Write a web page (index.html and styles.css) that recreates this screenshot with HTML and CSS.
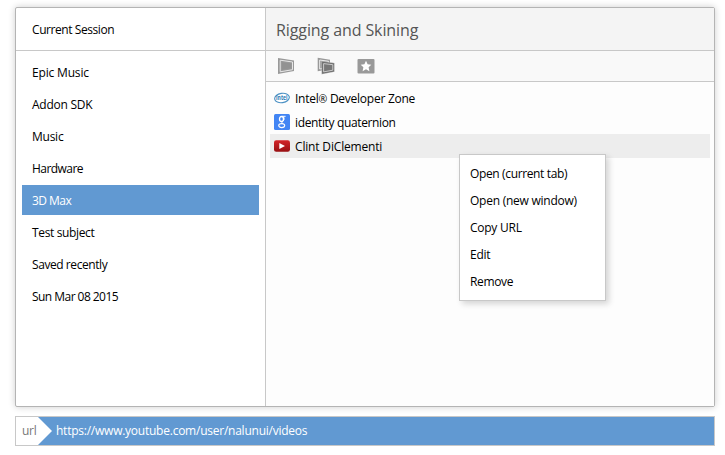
FILE: index.html
```html
<!DOCTYPE html>
<html lang="en">
<head>
<meta charset="utf-8">
<title>Session manager</title>
<link rel="stylesheet" href="styles.css">
</head>
<body>
<main class="panel">
  <aside class="sidebar">
    <div class="current tight"><span>Current Session</span></div>
    <nav class="sessions">
      <a class="session loose"><span>Epic Music</span></a>
      <a class="session"><span>Addon SDK</span></a>
      <a class="session"><span>Music</span></a>
      <a class="session tighter"><span>Hardware</span></a>
      <a class="session selected tighter"><span>3D Max</span></a>
      <a class="session snug"><span>Test subject</span></a>
      <a class="session tight"><span>Saved recently</span></a>
      <a class="session tighter"><span>Sun Mar 08 2015</span></a>
    </nav>
  </aside>
  <section class="content">
    <header class="title"><span>Rigging and Skining</span></header>
    <div class="toolbar">
      <svg class="tool" width="18" height="18" viewBox="0 0 18 18">
        <path d="M1 1L17 3.5V14L1 17Z" fill="#999"/>
        <path d="M3.2 3.2L15.5 5V12.7L3.2 14.8Z" fill="none" stroke="#e8e8e8"/>
        <path d="M5 5.3L13.7 6.4V11.3L5 12.7Z" fill="#929292"/>
      </svg>
      <svg class="tool" width="18" height="18" viewBox="0 0 18 18">
        <path d="M.7 .7L13 2.7V12L.7 14.3Z" fill="#999"/>
        <path d="M2.7 3L11.5 4.3V10.5L2.7 12Z" fill="#999" stroke="#eee"/>
        <path d="M4.7 4.2L17.4 6V14.8L4.7 17.2Z" fill="#6e6e6e" stroke="#f9f9f9" stroke-width=".3"/>
        <path d="M6.6 6.6L15.8 7.7V13.2L6.6 14.9Z" fill="#777" stroke="#d4d4d4" stroke-width=".9"/>
      </svg>
      <svg class="tool" width="18" height="18" viewBox="0 0 18 18">
        <rect x=".5" y="2" width="17" height="14.5" rx="1" fill="#999"/>
        <path d="M9 3.7L10.6 7.3L14.3 7.7L11.6 10.3L12.4 14.2L9 12.2L5.6 14.2L6.4 10.3L3.7 7.7L7.4 7.3Z" fill="#fff"/>
      </svg>
    </div>
    <div class="tabs">
      <div class="tab">
        <svg width="16" height="16" viewBox="0 0 16 16">
          <ellipse cx="8" cy="8" rx="7.4" ry="4.7" fill="#fff" stroke="#4b91c4" stroke-width="1.1" transform="rotate(-9 8 8)"/>
          <text class="intel-mark" x="2.1" y="10.3" textLength="11.4" lengthAdjust="spacingAndGlyphs">intel</text>
        </svg>
        <span>Intel<span class="reg">®</span> Developer Zone</span>
      </div>
      <div class="tab snug">
        <svg width="16" height="16" viewBox="0 0 16 16">
          <rect width="16" height="16" rx="1.5" fill="#4285f4"/>
          <g fill="none" stroke="#fff">
            <ellipse cx="7.5" cy="5" rx="2" ry="2.5" stroke-width="1.3"/>
            <path d="M8 2.3H11.6M9.6 2.8C10.6 5 9.9 6.5 8.2 7.6C7.2 8.4 8 8.9 9.2 9.7" stroke-width="1"/>
            <ellipse cx="7.7" cy="11.6" rx="3" ry="2" stroke-width="1.1"/>
          </g>
        </svg>
        <span>identity quaternion</span>
      </div>
      <div class="tab hovered loose">
        <svg width="16" height="16" viewBox="0 0 16 16">
          <defs><linearGradient id="red" x2="0" y2="1"><stop stop-color="#d42428"/><stop offset="1" stop-color="#980f12"/></linearGradient></defs>
          <rect y="2.2" width="16" height="11.5" rx="2.2" fill="url(#red)"/>
          <path d="M5.3 5V11L11 8Z" fill="#fff"/>
        </svg>
        <span>Clint DiClementi</span>
      </div>
    </div>
  </section>
</main>
<footer class="urlbar">
  <span class="label">url</span>
  <span class="arrow"></span>
  <span class="address">https://www.youtube.com/user/nalunui/videos</span>
</footer>
<div class="menu">
  <a class="snug">Open (current tab)</a>
  <a>Open (new window)</a>
  <a>Copy URL</a>
  <a>Edit</a>
  <a class="snug">Remove</a>
</div>
</body>
</html>
```
FILE: styles.css
```css
* { box-sizing: border-box; }
body {
  margin: 0;
  padding: 7px 10px 0 15px;
  background: #fff;
  color: #000;
  font: 12px/16px "Open Sans", "Noto Sans", sans-serif;
  letter-spacing: -0.25px;
  overflow: hidden;
}
.loose { letter-spacing: -0.17px; }
.snug { letter-spacing: -0.36px; }
.tight { letter-spacing: -0.43px; }
.tighter { letter-spacing: -0.54px; }
.panel {
  display: flex;
  width: 700px;
  height: 400px;
  border: 1px solid #b4b4b4;
  border-radius: 2px;
  box-shadow: 0 0 7px rgba(0, 0, 0, .2);
  background: #fff;
}
.sidebar { width: 250px; border-right: 1px solid #c8c8c8; }
.current {
  height: 43px;
  padding: 14px 16px 0;
  border-bottom: 1px solid #c8c8c8;
}
.sessions { display: grid; gap: 2px; padding: 6px; }
.session { height: 30px; padding: 8px 10px 6px; }
.selected { background: #6199d2; color: #fff; }
.content { flex: 1; background: #fdfdfd; }
.title {
  height: 43px;
  padding: 10px 10px;
  border-bottom: 1px solid #c8c8c8;
  background: #f4f4f4;
  color: #555;
  font-size: 16px;
  line-height: 24px;
  letter-spacing: -0.1px;
}
.toolbar {
  display: flex;
  gap: 22px;
  height: 31px;
  padding: 6px 11px;
  border-bottom: 1px solid #c8c8c8;
  background: #f9f9f9;
}
.tabs { padding: 4px; }
.tab {
  display: flex;
  align-items: center;
  gap: 5px;
  height: 24px;
  padding: 0 4px;
}
.tab > span { padding-top: 2px; }
.hovered { background: #ededed; }
.reg { font-size: 10.5px; }
.intel-mark {
  fill: #2878b4;
  font: bold 6.5px "Open Sans", sans-serif;
  letter-spacing: 0;
}
.urlbar {
  display: flex;
  width: 700px;
  height: 30px;
  margin-top: 9px;
  border: 1px solid #c8c8c8;
  background: #6199d2;
  line-height: 28px;
}
.label { width: 22px; padding-left: 6px; background: #fff; color: #777; }
.arrow { width: 14px; background: #fff; clip-path: polygon(0 0, 14px 50%, 0 100%); }
.address { padding-left: 4px; color: #fff; letter-spacing: -0.24px; }
.menu {
  position: absolute;
  left: 459px;
  top: 154px;
  width: 147px;
  height: 147px;
  padding: 5px 10px;
  border: 1px solid #c8c8c8;
  background: #fff;
  box-shadow: 3px 3px 6px rgba(0, 0, 0, .16);
}
.menu a { display: block; height: 27px; line-height: 28px; }
```
